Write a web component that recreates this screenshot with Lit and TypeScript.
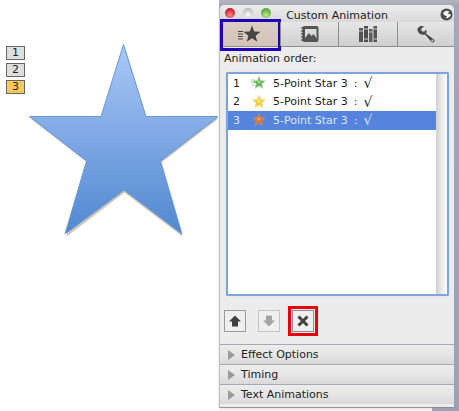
import { LitElement, html, css, svg } from "lit";
import { customElement } from "lit/decorators.js";

const star = (cx: number, cy: number, r: number) => {
  const pts: string[] = [];
  for (let i = 0; i < 10; i++) {
    const rad = i % 2 ? r * 0.42 : r;
    const a = -Math.PI / 2 + (i * Math.PI) / 5;
    pts.push(`${(cx + rad * Math.cos(a)).toFixed(1)},${(cy + rad * Math.sin(a)).toFixed(1)}`);
  }
  return pts.join(" ");
};

const rows = [
  { n: 1, fill: "#5fb04f", edge: "#a9d3a0", glow: "#a5dc8f", lines: true },
  { n: 2, fill: "#f5cf1f", edge: "#eecb84", glow: "#fff07a", lines: false },
  { n: 3, fill: "#e2702f", edge: "#c9926f", glow: "#f3a060", lines: false },
];

@customElement("app-root")
export class AppRoot extends LitElement {
  static styles = css`
    :host { display: block; width: 459px; height: 411px; overflow: hidden; background: #fff; font-family: "DejaVu Sans", sans-serif; }
    .page { display: flex; width: 459px; height: 411px; }
    .canvas { position: relative; width: 219px; flex: none; background: #fff; }
    .badges { display: flex; flex-direction: column; gap: 3px; padding: 46px 0 0 6px; }
    .badge { width: 19px; height: 14px; box-sizing: border-box; border: 1px solid #666; background: #dedede; color: #222; font: 11px/12px "DejaVu Sans", sans-serif; text-align: center; }
    .badge.on { background: #fdc75a; }
    .bigstar { position: absolute; left: 20px; top: 35px; }
    .desk { flex: 1; display: flex; flex-direction: column; background: linear-gradient(#b4b6bc, #a2a8b8 6px, #9aa2b8); }
    .panel { width: 235px; height: 402px; flex: none; margin-top: 5px; box-sizing: border-box; border-radius: 5px 5px 0 0; background: #ececec; border-left: 1px solid #bcbcbc; display: flex; flex-direction: column; box-shadow: 0 1px 1px #8b8b8b; position: relative; }
    .strip { flex: 1; background: linear-gradient(90deg, #f4f4f4 213px, #9aa2b8 213px); }
    .title { height: 17px; flex: none; position: relative; display: flex; align-items: center; justify-content: center; background: linear-gradient(#ededed, #d9d9d9); border-radius: 5px 5px 0 0; font-size: 11px; color: #222; padding: 3px 0 0 0; box-sizing: border-box; }
    .lights { position: absolute; left: 5px; top: 3px; display: flex; gap: 8px; }
    .light { width: 10px; height: 10px; border-radius: 50%; }
    .red { background: radial-gradient(circle at 50% 70%, #f88, #c8202c 70%); }
    .grey { background: radial-gradient(circle at 50% 70%, #fff, #b5b5b5 80%); }
    .green { background: radial-gradient(circle at 50% 70%, #bfe98e, #57a83a 70%); }
    .globe { position: absolute; right: 1px; top: 3px; display: block; }
    .tabs { display: flex; height: 24px; flex: none; border-bottom: 1px solid #8f8f8f; background: linear-gradient(#e6e6e6, #cfcfcf); }
    .tab { flex: none; display: flex; align-items: center; justify-content: center; border-left: 1px solid #8f8f8f; box-sizing: border-box; position: relative; }
    .tab:first-child { border-left: none; width: 60px; background: linear-gradient(#d9cdc5, #d5c3b9); }
    .tab:nth-child(2) { width: 58px; }
    .tab:nth-child(3) { width: 59px; }
    .tab:nth-child(4) { width: 57px; }
    .mark { position: absolute; left: 0; top: -3px; width: 61px; height: 32px; box-sizing: border-box; border: 3px solid #2200b8; }
    .label { font-size: 11px; color: #222; padding: 5px 0 0 4px; height: 25px; box-sizing: border-box; flex: none; line-height: 14px; }
    .listbox { margin-left: 6px; width: 223px; height: 224px; flex: none; box-sizing: border-box; border: 2px solid #7ea4da; border-radius: 2px; background: #fff; display: flex; box-shadow: 0 0 1px #9db8e0; }
    .items { flex: 1; }
    .track { width: 11px; flex: none; background: linear-gradient(90deg, #d0d0d0, #f2f2f2 70%, #fafafa); }
    .row { height: 18.5px; display: flex; align-items: center; font-size: 11px; color: #222; }
    .row.sel { background: #5684dc; color: #dde8fa; }
    .num { width: 23px; padding-left: 5px; box-sizing: border-box; flex: none; }
    .row svg { flex: none; display: block; margin-right: 7px; }
    .colon { margin-left: 6px; }
    .root { margin-left: 6px; font-size: 14px; line-height: 14px; }
    .tools { display: flex; align-items: center; height: 48px; flex: none; padding: 2px 0 0 4px; box-sizing: border-box; }
    .tool { width: 22px; height: 22px; box-sizing: border-box; border: 1px solid #9a9a9a; background: #efefef; display: flex; align-items: center; justify-content: center; }
    .tool.dim { border-color: #c4c4c4; margin-left: 12px; }
    .tool.del { margin-left: 12px; outline: 3px solid #e8000c; outline-offset: 1px; border-color: #8a8a8a; }
    .sec { height: 20px; flex: none; box-sizing: border-box; border-top: 1px solid #a4abb6; display: flex; align-items: center; gap: 6px; padding-left: 8px; font-size: 11px; color: #222; background: linear-gradient(#ececec, #e6e6e6 50%, #d9d9d9); }
    .tri { width: 0; height: 0; border-left: 7px solid #9a9a9a; border-top: 5px solid transparent; border-bottom: 5px solid transparent; }
    .gap { flex: 1; background: #ececec; }
  `;

  render() {
    return html`<div class="page">
      <div class="canvas">
        <div class="badges">
          <div class="badge">1</div>
          <div class="badge">2</div>
          <div class="badge on">3</div>
        </div>
        <svg class="bigstar" width="205" height="210" viewBox="20 35 205 210">
          <defs>
            <linearGradient id="sg" x1="0" y1="0" x2="0" y2="1">
              <stop offset="0" stop-color="#aac8f8" />
              <stop offset="1" stop-color="#5088d0" />
            </linearGradient>
          </defs>
          <polygon points="124,45 146,117 218,117 161,161 182,235 124,191 66,235 87,161 30,117 102,117" fill="#c8c4b8" transform="translate(0.5,1.5)" />
          <polygon points="123.5,44.5 146,116.5 218,116.5 160.5,161 182,234 124,190 65,234 86.5,161 29.5,116.5 101,116.5" fill="url(#sg)" stroke="#6d97d2" stroke-width="1" />
        </svg>
      </div>
      <div class="desk">
        <div class="panel">
          <div class="title">
            <div class="lights"><div class="light red"></div><div class="light grey"></div><div class="light green"></div></div>
            Custom Animation
            <svg class="globe" width="13" height="13" viewBox="0 0 13 13">
              <circle cx="6.5" cy="6.5" r="6" fill="#4a4a4a" />
              <path d="M3 5.5C4 2.8 7.5 2 9.5 3.8L7.7 5.4L11 6.6C10.5 9 8 10.8 5.8 10L7 8C5.5 8.3 4 7 3 5.5Z" fill="#f2f2f2" />
            </svg>
          </div>
          <div class="tabs">
            <div class="tab">
              <svg width="26" height="18" viewBox="0 0 26 18">
                <path d="M1 6.5H6M1 9H6M1 11.5H6M1 14H6" stroke="#444" stroke-width="1" />
                <polygon points="${star(15, 9.5, 9)}" fill="#454545" />
              </svg>
              <div class="mark"></div>
            </div>
            <div class="tab">
              <svg width="20" height="18" viewBox="0 0 20 18">
                <rect x="2.5" y="1" width="16" height="16" rx="2" fill="#555" />
                <rect x="5" y="4" width="11.5" height="10" fill="#ddd" />
                <path d="M5 13L9 8L11.5 11L13.5 9L16.5 13V14H5Z" fill="#555" />
                <path d="M1 3H4M1 6H4M1 9H4M1 12H4M1 15H4" stroke="#333" stroke-width="1.2" />
              </svg>
            </div>
            <div class="tab">
              <svg width="20" height="18" viewBox="0 0 20 18">
                <rect x="1" y="3" width="4" height="14" fill="#555" />
                <rect x="6" y="1" width="4" height="16" fill="#4c4c4c" />
                <rect x="11" y="4" width="3.5" height="13" fill="#5c5c5c" />
                <rect x="15.5" y="1" width="3.5" height="16" fill="#555" />
                <path d="M1 6H5M6 4H10M6 14H10M11 7H14.5M15.5 4H19M15.5 14H19" stroke="#c8c8c8" stroke-width="1" />
              </svg>
            </div>
            <div class="tab">
              <svg width="20" height="19" viewBox="0 0 20 19">
                <path d="M1.5 5.5C1 3 3.5 0.5 6.5 1L8 1.5L5 4L6 6.5L8.5 6.5L10 4.5C11 6 10.5 7.5 10 8.5L18 14.5C19.5 16 17.5 18.5 15.5 17L9 9.5C6 10.5 2.5 9 1.5 5.5Z" fill="#4a4a4a" />
                <circle cx="16.3" cy="15.6" r="1" fill="#ddd" />
              </svg>
            </div>
          </div>
          <div class="label">Animation order:</div>
          <div class="listbox">
            <div class="items">
              ${rows.map(
                (r) => html`<div class="row ${r.n === 3 ? "sel" : ""}">
                  <div class="num">${r.n}</div>
                  <svg width="15" height="14" viewBox="0 0 15 14">
                    ${r.lines ? svg`<path d="M0 4H4M0 6.5H4M1 9H4" stroke="#a8d0a0" stroke-width="1" />` : ""}
                    <polygon points="${star(8, 7, 6.5)}" fill="${r.fill}" stroke="${r.edge}" stroke-width="0.8" />
                    <circle cx="8" cy="6" r="1.6" fill="${r.glow}" />
                  </svg>
                  <span>5-Point Star 3</span><span class="colon">:</span><span class="root">√</span>
                </div>`
              )}
            </div>
            <div class="track"></div>
          </div>
          <div class="tools">
            <div class="tool">
              <svg width="14" height="14" viewBox="0 0 14 14"><path d="M7 1.5L13 7.5H10V12.5H4V7.5H1Z" fill="#3f3f3f" /></svg>
            </div>
            <div class="tool dim">
              <svg width="14" height="14" viewBox="0 0 14 14"><path d="M4 1.5H10V6.5H13L7 12.5L1 6.5H4Z" fill="#a4a4a4" /></svg>
            </div>
            <div class="tool del">
              <svg width="14" height="14" viewBox="0 0 14 14"><path d="M2.5 2.5L11.5 11.5M11.5 2.5L2.5 11.5" stroke="#444" stroke-width="3" /></svg>
            </div>
          </div>
          <div class="sec"><div class="tri"></div>Effect Options</div>
          <div class="sec"><div class="tri"></div>Timing</div>
          <div class="sec"><div class="tri"></div>Text Animations</div>
          <div class="gap"></div>
        </div>
        <div class="strip"></div>
      </div>
    </div>`;
  }
}
